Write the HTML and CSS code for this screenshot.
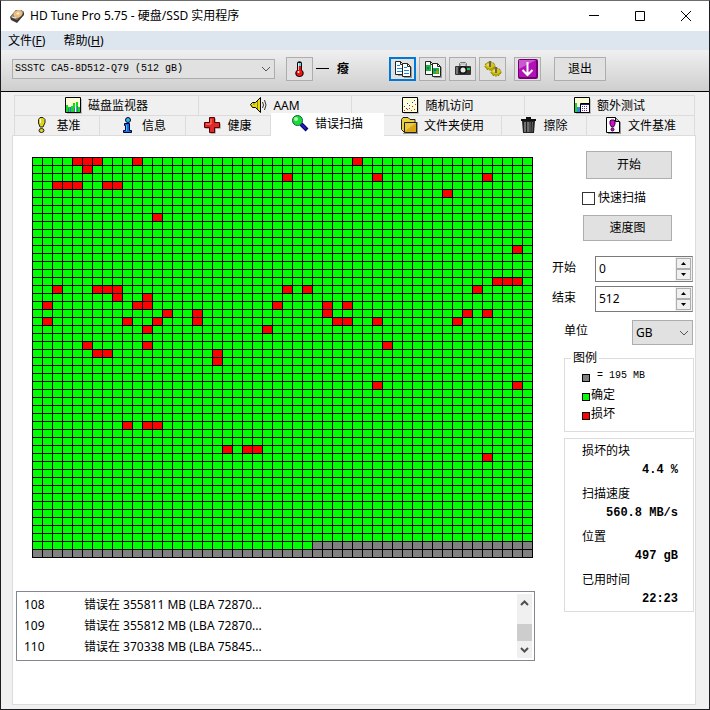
FILE: index.html
```html
<!DOCTYPE html>
<html lang="zh-CN">
<head>
<meta charset="utf-8">
<meta name="viewport" content="width=device-width, initial-scale=1">
<title>HD Tune Pro 5.75 - 硬盘/SSD 实用程序</title>
<link rel="stylesheet" href="styles.css">
</head>
<body>
<div class="window">
  <header class="titlebar">
    <svg class="app-icon" viewBox="0 0 16 16" aria-hidden="true">
      <path d="M1 9 7 2h5l3 2v3l-7 8-6-3z" fill="#3b3836"/>
      <path d="M1 9 7 2h5l3 2-7 8z" fill="#8b7e72"/>
      <ellipse cx="9" cy="6" rx="4.500" ry="3.500" fill="#e9bd7e" transform="rotate(-25 9 6)"/>
      <ellipse cx="9" cy="5.500" rx="1.500" ry="1" fill="#fff3dc"/>
      <path d="M3 9l4 1" stroke="#eee" fill="none"/>
    </svg>
    <h1 class="title">HD Tune Pro 5.75 - 硬盘/SSD 实用程序</h1>
    <div class="caption">
      <button type="button" class="caption-btn" aria-label="最小化"><svg viewBox="0 0 12 12"><path d="M1 5.500h10" stroke="#000" fill="none"/></svg></button>
      <button type="button" class="caption-btn" aria-label="最大化"><svg viewBox="0 0 12 12"><path d="M1.500 1.500h9v9h-9z" stroke="#000" fill="none"/></svg></button>
      <button type="button" class="caption-btn" aria-label="关闭"><svg viewBox="0 0 12 12"><path d="M1 1l10 10M11 1 1 11" stroke="#000" fill="none"/></svg></button>
    </div>
  </header>

  <nav class="menubar">
    <a href="#" class="menu">文件(<u>F</u>)</a>
    <a href="#" class="menu">帮助(<u>H</u>)</a>
  </nav>

  <div class="toolbar">
    <div class="select drive">
      <select aria-label="驱动器"><option>SSSTC CA5-8D512-Q79 (512 gB)</option></select>
      <svg class="chevron" viewBox="0 0 10 6" aria-hidden="true"><path d="M1 1l4 4 4-4" fill="none" stroke="#555"/></svg>
    </div>
    <button type="button" class="tool" aria-label="温度">
      <svg viewBox="0 0 18 18"><path d="M6 3.500C6 .5 11 .5 11 3.500V10c3 2 2 7-2.500 7S3 12 6 10z" fill="#200"/><path d="M7 3h3v4H7z" fill="#3fe0ee"/><path d="M7 6h3v5H7z" fill="#e01010"/><circle cx="8.500" cy="13" r="3" fill="#f01515"/><circle cx="7.500" cy="12" r="1" fill="#fff"/><path d="M7 3h1v7H7z" fill="#fff" opacity=".7"/></svg>
    </button>
    <output class="temperature"><i class="dash"></i><b>癈</b></output>
    <div class="tool-group">
      <button type="button" class="tool is-focused" aria-label="复制文本">
        <svg viewBox="0 0 18 18"><path d="M4 15h5v1H4zM10 17h7V7h1v11h-8z" fill="#999"/><path d="M1.500 1.500h5l3 3v10h-8z" fill="#fff" stroke="#222"/><path d="M6.500 1.500v3h3" fill="none" stroke="#222"/><path d="M3 5.500h3M3 8.500h5M3 11.500h5" stroke="#1888e8"/><path d="M8.500 3.500h5l3 3v10h-8z" fill="#fff" stroke="#222"/><path d="M13.500 3.500v3h3" fill="none" stroke="#222"/><path d="M10 7.500h3M10 10.500h5M10 13.500h5" stroke="#1888e8"/></svg>
      </button>
      <button type="button" class="tool" aria-label="复制图像">
        <svg viewBox="0 0 18 18"><path d="M10 17h7V7h1v11h-8z" fill="#999"/><path d="M1.500 1.500h5l3 3v10h-8z" fill="#fff" stroke="#222"/><path d="M6.500 1.500v3h3" fill="none" stroke="#222"/><path d="M2 5h5v6H2z" fill="#18b828"/><path d="M3 7h2v2H3z" fill="#2060d0"/><path d="M8.500 3.500h5l3 3v10h-8z" fill="#fff" stroke="#222"/><path d="M13.500 3.500v3h3" fill="none" stroke="#222"/><path d="M9 8h6v6H9z" fill="#18b828"/><path d="M10 9h2v2h-2z" fill="#2060d0"/><path d="M12 11h2v2h-2z" fill="#f08010"/></svg>
      </button>
      <button type="button" class="tool" aria-label="截图">
        <svg viewBox="0 0 18 18"><path d="M5.500 6V3.500l1-1h5l1 1V6" fill="none" stroke="#777"/><path d="M6.500 6V4h5v2" fill="none" stroke="#aaa"/><rect x="1" y="6" width="16" height="9" rx="1" fill="#333"/><path d="M2 7h2v7H2z" fill="#777"/><circle cx="9" cy="10" r="4" fill="#111"/><circle cx="9" cy="10" r="2.500" fill="#e8e8e8"/><path d="M13 8h3v2h-3z" fill="#20c840"/></svg>
      </button>
      <button type="button" class="tool" aria-label="选项">
        <svg viewBox="0 0 18 18"><g fill="#d4c416" stroke="#8a7c00" stroke-dasharray="2 1"><ellipse cx="6" cy="6" rx="5" ry="4"/><ellipse cx="12" cy="12" rx="5" ry="4"/></g><path d="M2 7q4 4 8 0M8 13q4 4 8 0" fill="none" stroke="#a89800"/><path d="M6 1v6M12 7v6" stroke="#666" stroke-width="2"/><path d="M3 5h2M9 11h2" stroke="#fff580"/></svg>
      </button>
      <button type="button" class="tool tool-save" aria-label="保存">
        <svg viewBox="0 0 20 20"><rect x="0" y="0" width="20" height="20" rx="2" fill="#720072"/><rect x="1" y="1" width="17" height="17" rx="1" fill="#b012b8"/><path d="M1 1h17L1 10z" fill="#cc58d0"/><path d="M9.500 3v13M4.500 11l5 5 5-5" fill="none" stroke="#fff" stroke-width="2"/></svg>
      </button>
      <button type="button" class="btn exit">退出</button>
    </div>
  </div>

  <main class="content">
    <div class="tabs" role="tablist">
      <div class="tab-row tab-row-back">
        <button type="button" class="tab" role="tab"><svg viewBox="0 0 17 17"><path d="M2 16h15V2" fill="none" stroke="#999"/><path d="M.5.500h15v15H.5z" fill="#ffffd8" stroke="#000"/><path d="M1 8h2v7H1zM6 9h3v6H6zM11 5h2v10h-2z" fill="#10dc20"/><path d="M3 10h2v5H3zM8 6h2v9H8zM13 10h2v5h-2z" fill="#10dc20"/><path d="M3 11h1v4H3zM5 10h1v5H5zM9 11h1v4H9zM12 9h1v6h-1z" fill="#4864d8"/></svg>磁盘监视器</button>
        <button type="button" class="tab" role="tab"><svg viewBox="0 0 17 17"><path d="M.5 7.500 2.500 5.500h3l5-5v15l-5-5h-3z" fill="#e8dc10" stroke="#000"/><path d="M7.500 4v8M3 7h2" stroke="#8a8200"/><path d="M12.500 5q2 3 0 6M14.500 3q3 5 0 10" fill="none" stroke="#333"/></svg>AAM</button>
        <button type="button" class="tab" role="tab"><svg viewBox="0 0 17 17"><path d="M2 16h15V2" fill="none" stroke="#999"/><path d="M.5.500h15v15H.5z" fill="#ffffd8" stroke="#000"/><path d="M2 9h1v1H2zM5 6h1v1H5zM7 8h1v1H7zM10 5h1v1h-1zM12 3h1v1h-1zM4 11h1v1H4z" fill="#2040e0"/><path d="M2 13h1v1H2zM5 12h1v1H5zM7 11h1v1H7zM9 13h1v1H9zM10 9h1v1h-1zM12 12h1v1h-1zM13 7h1v1h-1z" fill="#f02020"/></svg>随机访问</button>
        <button type="button" class="tab" role="tab"><svg viewBox="0 0 17 17"><path d="M2 16h15V2" fill="none" stroke="#999"/><path d="M.5.500h15v15H.5z" fill="#ffffd8" stroke="#000"/><path d="M1 6h2v9H1z" fill="#10dc20"/><path d="M3 10h3v5H3z" fill="#4080e0"/><path d="M6.500 6.500h9v9h-9z" fill="#fff" stroke="#000"/><path d="M7 7h8v1H7z" fill="#182080"/><path d="M8 9h1v1H8zM10 9h1v1h-1zM12 9h1v1h-1zM8 11h1v1H8zM10 11h1v1h-1zM12 11h1v1h-1zM8 13h1v1H8zM10 13h1v1h-1zM12 13h1v1h-1z" fill="#702090"/></svg>额外测试</button>
      </div>
      <div class="tab-row tab-row-front">
        <button type="button" class="tab" role="tab"><svg viewBox="0 0 17 17"><path d="M5.500 2.500 7 .5h3l2 2v3L10 10H7L5.500 6z" fill="#e0d418" stroke="#222"/><path d="M7 2h1v4H7z" fill="#fff"/><ellipse cx="8.500" cy="13.500" rx="2.500" ry="2" fill="#e0d418" stroke="#222"/></svg>基准</button>
        <button type="button" class="tab" role="tab"><svg viewBox="0 0 17 17"><circle cx="9" cy="3" r="2.500" fill="#30b8e8" stroke="#003"/><path d="M5.500 6.500h5v7h2v2h-8v-2h2v-5h-1z" fill="#1070e8" stroke="#003"/><path d="M7 8h1v6H7z" fill="#50b8ff"/></svg>信息</button>
        <button type="button" class="tab" role="tab"><svg viewBox="0 0 17 17"><path d="M6.500 1.500h5v5h5v5h-5v5h-5v-5h-5v-5h5z" fill="#777"/><path d="M5.500.5h5v5h5v5h-5v5h-5v-5h-5v-5h5z" fill="#e02828" stroke="#500"/><path d="M7 2v5H2" fill="none" stroke="#ff8878"/></svg>健康</button>
        <button type="button" class="tab is-active" role="tab" aria-selected="true"><svg viewBox="0 0 17 17"><path d="m9 9 6 6" stroke="#000060" stroke-width="4"/><path d="m9 9 5 5" stroke="#2020d0" stroke-width="2"/><circle cx="5.500" cy="5.500" r="5" fill="#20d838" stroke="#064"/><circle cx="4" cy="4" r="2" fill="#a8ffa8"/></svg>错误扫描</button>
        <button type="button" class="tab" role="tab"><svg viewBox="0 0 17 17"><path d="M2 16h14V5h1v12H2z" fill="#999"/><path d="M.5 2.500 2 .500h5l2 2h5v3h1.500v10h-12l-3-3z" fill="#e8d040" stroke="#222"/><path d="M3.500 5.500h12v10h-12z" fill="#d8a818" stroke="#222"/><path d="M4 6h11L4 14z" fill="#ecc83c"/></svg>文件夹使用</button>
        <button type="button" class="tab" role="tab"><svg viewBox="0 0 17 17"><path d="M6 0h5v2h5v2H1V2h5z" fill="#111"/><path d="M2 4h13l-1 12H3z" fill="#222"/><path d="M5 5v10M8 5v10" stroke="#bbb"/><path d="M10 5v10" stroke="#777"/><path d="M12.500 5 12 15" stroke="#666"/></svg>擦除</button>
        <button type="button" class="tab" role="tab"><svg viewBox="0 0 17 17"><path d="M3 16h12V5h1v12H3z" fill="#999"/><path d="M1.500.5h9l4 4v11h-13z" fill="#fff" stroke="#000"/><path d="M10.500.5v4h4" fill="#bbb" stroke="#000"/><path d="M6 3h3l1 1v3L8.500 10h-2L5 7V4z" fill="#d010d0" stroke="#303"/><circle cx="7.500" cy="12.500" r="1.500" fill="#d010d0" stroke="#303"/></svg>文件基准</button>
      </div>
    </div>

    <section class="panel" role="tabpanel" aria-label="错误扫描">
      <div class="scan">
        <div class="map" id="map" role="img" aria-label="块图"></div>
        <div class="log">
          <table class="log-table">
            <tbody>
              <tr><td class="log-id">108</td><td>错误在 355811 MB (LBA 72870...</td></tr>
              <tr><td class="log-id">109</td><td>错误在 355812 MB (LBA 72870...</td></tr>
              <tr><td class="log-id">110</td><td>错误在 370338 MB (LBA 75845...</td></tr>
            </tbody>
          </table>
          <div class="scrollbar">
            <button type="button" class="scroll-btn" aria-label="向上"><svg viewBox="0 0 9 6"><path d="m1 5 3.500-3.500L8 5" fill="none" stroke="#505050" stroke-width="2"/></svg></button>
            <div class="scroll-track"><div class="scroll-thumb"></div></div>
            <button type="button" class="scroll-btn" aria-label="向下"><svg viewBox="0 0 9 6"><path d="m1 1 3.500 3.500L8 1" fill="none" stroke="#505050" stroke-width="2"/></svg></button>
          </div>
        </div>
      </div>

      <aside class="side">
        <button type="button" class="btn start">开始</button>
        <label class="check"><input type="checkbox">快速扫描</label>
        <button type="button" class="btn speed">速度图</button>
        <div class="field">
          <label for="from">开始</label>
          <div class="spin">
            <input id="from" type="text" value="0">
            <div class="spin-btns">
              <button type="button" aria-label="增加"><svg viewBox="0 0 5 3"><path d="M0 3h5L2.500 0z"/></svg></button>
              <button type="button" aria-label="减少"><svg viewBox="0 0 5 3"><path d="M0 0h5L2.500 3z"/></svg></button>
            </div>
          </div>
        </div>
        <div class="field">
          <label for="to">结束</label>
          <div class="spin">
            <input id="to" type="text" value="512">
            <div class="spin-btns">
              <button type="button" aria-label="增加"><svg viewBox="0 0 5 3"><path d="M0 3h5L2.500 0z"/></svg></button>
              <button type="button" aria-label="减少"><svg viewBox="0 0 5 3"><path d="M0 0h5L2.500 3z"/></svg></button>
            </div>
          </div>
        </div>
        <div class="field unit">
          <label for="unit">单位</label>
          <div class="select">
            <select id="unit"><option>GB</option></select>
            <svg class="chevron" viewBox="0 0 10 6" aria-hidden="true"><path d="M1 1l4 4 4-4" fill="none" stroke="#555"/></svg>
          </div>
        </div>
        <fieldset class="legend">
          <legend>图例</legend>
          <ul>
            <li class="block-size"><i class="swatch swatch-todo"></i>= 195 MB</li>
            <li><i class="swatch swatch-ok"></i>确定</li>
            <li><i class="swatch swatch-bad"></i>损坏</li>
          </ul>
        </fieldset>
        <dl class="stats">
          <dt>损坏的块</dt><dd>4.4 %</dd>
          <dt>扫描速度</dt><dd>560.8 MB/s</dd>
          <dt>位置</dt><dd>497 gB</dd>
          <dt>已用时间</dt><dd>22:23</dd>
        </dl>
      </aside>
    </section>
  </main>
</div>
<script src="map.js"></script>
</body>
</html>
```
FILE: map.js
```js
// Damaged blocks, as columns listed by row.
const damaged = {
  0: [4, 5, 6, 10, 32],
  1: [5],
  2: [25, 34, 45],
  3: [2, 3, 4, 7, 8],
  4: [41],
  7: [12],
  11: [48],
  15: [46, 47, 48],
  16: [2, 6, 7, 8, 25, 27, 44],
  17: [8, 11],
  18: [1, 10, 11, 24, 29, 31],
  19: [13, 16, 29, 43, 45],
  20: [1, 9, 12, 16, 30, 31, 34, 42],
  21: [11, 23],
  23: [5, 11, 35],
  24: [6, 7, 18],
  25: [18],
  28: [34, 48],
  33: [9, 11, 12],
  36: [19, 21, 22],
  37: [45]
};
const size = 50;
const scanned = 48 * size + 28;
const map = document.getElementById('map');

for (let i = 0; i < size * size; i++) {
  const row = Math.floor(i / size);
  const cell = document.createElement('i');
  if (i >= scanned) cell.className = 'todo';
  else if ((damaged[row] || []).includes(i % size)) cell.className = 'bad';
  map.append(cell);
}
```
FILE: styles.css
```css
* {
  box-sizing: border-box;
}

:root {
  --ui: "Noto Sans", "Noto Sans CJK SC", sans-serif;
  --mono: "Liberation Mono", "Noto Sans CJK SC", monospace;
  --line: #dcdcdc;
  --face: #e1e1e1;
  --edge: #adadad;
}

body {
  margin: 0;
  font: 12px/16px var(--ui);
  color: #000;
}

button,
input,
select {
  margin: 0;
  padding: 0;
  border: 0;
  border-radius: 0;
  background: none;
  color: inherit;
  font: inherit;
}

svg {
  display: block;
}

.window {
  display: flex;
  flex-direction: column;
  min-height: 100vh;
  border: 1px solid #1c1c22;
  border-top-color: #6c6c6c;
  background: #f0f0f0;
}

.titlebar {
  display: flex;
  align-items: center;
  height: 30px;
  padding-left: 8px;
  background: #fff;
}

.app-icon {
  width: 16px;
  height: 16px;
}

.title {
  flex: 1;
  margin: 0 0 0 5px;
  font-size: 12px;
  font-weight: 400;
}

.caption {
  display: flex;
}

.caption-btn {
  display: grid;
  place-items: center;
  width: 46px;
  height: 30px;
}

.caption-btn svg {
  width: 12px;
  height: 12px;
}

.menubar {
  display: flex;
  gap: 18px;
  height: 19px;
  padding-left: 7px;
  background: #dde5ee;
}

.menu {
  color: inherit;
  line-height: 20px;
  text-decoration: none;
}

.toolbar {
  display: flex;
  align-items: center;
  height: 42px;
  padding: 0 11px 4px;
  border-bottom: 1px solid #000;
  background: linear-gradient(#f0f0f0, #cecece);
}

.select {
  position: relative;
}

.select select {
  width: 100%;
  height: 100%;
  padding-left: 3px;
  border: 1px solid var(--edge);
  background: var(--face);
  appearance: none;
}

.chevron {
  position: absolute;
  top: 50%;
  right: 4px;
  width: 10px;
  height: 6px;
  margin-top: -3px;
  pointer-events: none;
}

.drive {
  width: 263px;
  height: 20px;
  margin-right: 11px;
}

.drive select {
  padding-left: 2px;
  font: 10px/16px var(--mono);
}

.tool,
.btn {
  border: 1px solid var(--edge);
  background: var(--face);
}

.tool {
  display: grid;
  place-items: center;
  width: 27px;
  height: 24px;
}

.tool svg {
  width: 18px;
  height: 18px;
}

.tool.is-focused {
  border: 2px solid #0078d7;
}

.tool.tool-save {
  margin-left: 5px;
}

.tool-save svg {
  width: 20px;
  height: 20px;
}

.temperature {
  display: flex;
  flex: 1;
  align-items: center;
  gap: 8px;
  padding-left: 3px;
}

.dash {
  width: 13px;
  height: 1px;
  background: #000;
}

.tool-group {
  display: flex;
  gap: 3px;
  margin-right: 92px;
}

.exit {
  width: 52px;
  height: 24px;
  margin-left: 10px;
}

.content {
  display: flex;
  flex: 1;
  flex-direction: column;
  padding: 3px 13px 4px 11px;
}

.tabs {
  padding: 0 1px 0 2px;
}

.tab-row {
  display: grid;
  border-left: 1px solid var(--line);
}

.tab-row-back {
  grid-template-columns: 184fr 153fr 173fr 170fr;
}

.tab-row-front {
  grid-template-columns: 85fr 86fr 85fr 113fr 118fr 85fr 108fr;
}

.tab {
  display: flex;
  align-items: center;
  justify-content: center;
  gap: 6px;
  height: 20px;
  border: solid var(--line);
  border-width: 1px 1px 0 0;
  white-space: nowrap;
}

.tab svg {
  width: 17px;
  height: 17px;
}

.tab.is-active {
  position: relative;
  height: 24px;
  margin: -2px 0;
  padding-bottom: 3px;
  border: 0;
  background: #fff;
}

.panel {
  display: grid;
  flex: 1;
  grid-template-columns: 1fr 142px;
  gap: 17px;
  align-items: start;
  padding: 0 1px 20px 3px;
  border: 1px solid var(--line);
  background: #fff;
}

.scan {
  display: grid;
  gap: 33px;
  padding-top: 21px;
}

.map {
  display: grid;
  grid-template-columns: repeat(50, 1fr);
  grid-template-rows: repeat(50, 1fr);
  gap: 1px;
  margin: 0 2px 0 16px;
  padding: 1px;
  aspect-ratio: 501 / 401;
  background: #000;
}

.map i {
  background: #0f0;
}

.map .bad {
  background: #f00;
}

.map .todo {
  background: #808080;
}

.log {
  display: flex;
  justify-content: space-between;
  height: 70px;
  padding: 2px;
  border: 1px solid #828790;
}

.log-table {
  border-collapse: collapse;
  height: 63px;
}

.log-table td {
  height: 21px;
  padding: 0;
}

.log-table .log-id {
  width: 65px;
  padding-left: 5px;
}

.scrollbar {
  display: flex;
  flex-direction: column;
  width: 15px;
  background: #f0f0f0;
}

.scroll-btn {
  display: grid;
  place-items: center;
  height: 17px;
}

.scroll-btn svg {
  width: 9px;
  height: 6px;
}

.scroll-track {
  display: flex;
  flex: 1;
  flex-direction: column;
  justify-content: flex-end;
}

.scroll-thumb {
  height: 17px;
  background: #cdcdcd;
}

.side {
  display: flex;
  flex-direction: column;
  padding-top: 15px;
}

.start {
  width: 86px;
  height: 28px;
  margin-left: 34px;
}

.check {
  display: flex;
  align-items: center;
  gap: 3px;
  height: 16px;
  margin: 11px 0 9px 30px;
}

.check input {
  width: 13px;
  height: 13px;
  border: 1px solid #333;
  background: #fff;
  appearance: none;
}

.check input:checked {
  background: #333;
}

.speed {
  width: 89px;
  height: 26px;
  margin: 0 0 15px 31px;
}

.field {
  display: flex;
  align-items: center;
  justify-content: space-between;
  margin: 0 1px 4px 0;
}

.field > label {
  padding-bottom: 3px;
}

.spin {
  display: flex;
  width: 98px;
  height: 26px;
  border: 1px solid var(--edge);
  border-color: #7a7a7a var(--edge) #7a7a7a #7a7a7a;
}

.spin input {
  flex: 1;
  min-width: 0;
  padding-left: 3px;
}

.spin-btns {
  display: grid;
  width: 17px;
  padding: 1px;
  background: #f0f0f0;
}

.spin-btns button {
  display: grid;
  place-items: center;
  border: 1px solid var(--edge);
}

.spin-btns svg {
  width: 5px;
  height: 3px;
}

.unit {
  margin: 4px 1px 5px 12px;
}

.unit .select {
  width: 61px;
  height: 25px;
}

.legend {
  min-width: 0;
  margin: 0 0 6px 12px;
  padding: 0 0 8px 17px;
  border: 1px solid var(--line);
}

.legend legend {
  margin-left: -11px;
  padding: 0 2px;
}

.legend ul {
  margin: 0;
  padding: 0;
  list-style: none;
}

.legend li {
  display: flex;
  align-items: center;
  gap: 1px;
  height: 19px;
}

.legend .block-size {
  gap: 7px;
  font-family: var(--mono);
  font-size: 10px;
}

.swatch {
  width: 8px;
  height: 8px;
  margin-top: 5px;
  border: 1px solid #000;
}

.swatch-todo {
  background: #808080;
}

.swatch-ok {
  background: #0f0;
}

.swatch-bad {
  background: #f00;
}

.stats {
  margin: 0 0 0 12px;
  padding: 2px 15px 0 17px;
  border: 1px solid var(--line);
}

.stats dt {
  line-height: 20px;
}

.stats dd {
  margin: 0 0 5px;
  font: bold 12px/18px var(--mono);
  text-align: right;
}

.stats dd:last-child {
  margin-bottom: 3px;
}
```
